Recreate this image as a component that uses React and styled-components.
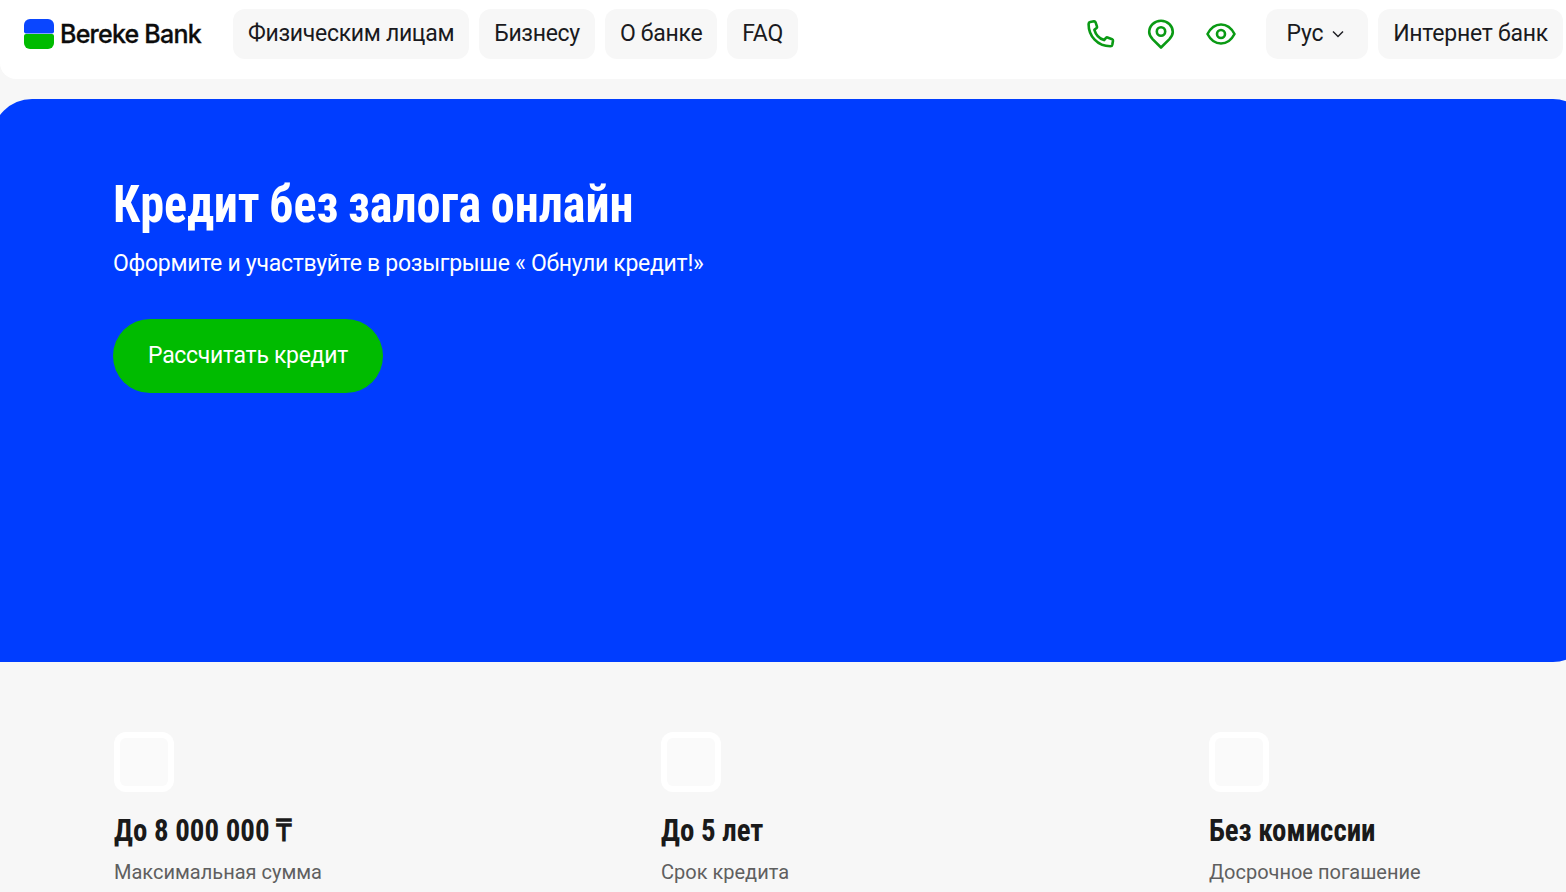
import React from "react";
import styled, { createGlobalStyle } from "styled-components";

const Global = createGlobalStyle`
  html, body { margin: 0; padding: 0; overflow: hidden; background: #f7f7f7; }
  body { font-family: Roboto, "Liberation Sans", sans-serif; color: #1a1a1a; }
`;
const Page = styled.div`width: 1566px; height: 892px; overflow: hidden;`;
const Header = styled.header`
  height: 79px; box-sizing: border-box; background: #fff;
  border-radius: 0 0 0 16px; display: flex; align-items: flex-start;
  padding: 9px 3px 0 24px;
`;
const Logo = styled.div`display: flex; align-items: center; gap: 6px; width: 209px; height: 50px;`;
const BrandName = styled.span`
  font-family: Inter, sans-serif; font-weight: 500; font-size: 25px; letter-spacing: -0.77px; color: #0c0c0c;
  -webkit-text-stroke: 0.3px #0c0c0c;
`;
const Nav = styled.nav`display: flex; gap: 10px;`;
const Pill = styled.a`
  height: 50px; box-sizing: border-box; padding: 0 15px; background: #f7f7f7; border-radius: 12px;
  display: flex; align-items: center; gap: 8px; font-size: 23px; letter-spacing: -0.3px; line-height: 50px; color: #1a1a20;
`;
const LangPill = styled(Pill)`padding: 0 23px 0 21px;`;
const BankPill = styled(Pill)`letter-spacing: -0.24px;`;
const Right = styled.div`margin-left: auto; display: flex; align-items: center; gap: 10px;`;
const Icons = styled.div`display: flex; align-items: center; gap: 30px; margin-right: 20px;`;
const Hero = styled.section`
  margin: 20px 0 0 -8px; width: 1601px; height: 563px; box-sizing: border-box;
  background: #003dff; border-radius: 40px 40px 40px 0; padding: 75px 0 0 121px;
`;
const Title = styled.h1`
  margin: 0; font-size: 51px; line-height: 62px; font-weight: 700; color: #fff; word-spacing: -1.5px;
  font-stretch: 75%; font-family: "Roboto Condensed", Roboto, sans-serif;
  transform: scaleX(0.944); transform-origin: left center; white-space: nowrap;
`;
const Sub = styled.p`margin: 12px 0 0; font-size: 23px; letter-spacing: -0.28px; line-height: 32px; color: #fff;`;
const Cta = styled.button`
  display: block; margin-top: 39px; width: 270px; height: 74px; border: 0; border-radius: 37px; background: #00bb00;
  color: #fff; font: 400 23px Roboto, sans-serif; letter-spacing: -0.3px; padding: 0 0 2px;
`;
const Features = styled.div`
  display: grid; grid-template-columns: 547px 548px 1fr; padding: 70px 0 0 114px;
`;
const Feature = styled.div`display: flex; flex-direction: column; align-items: flex-start;`;
const Tile = styled.div`
  width: 60px; height: 60px; border-radius: 12px; background: #fff; display: flex; align-items: center; justify-content: center;
`;
const TileInner = styled.div`width: 48px; height: 48px; background: #fafafa; border-radius: 6px;`;
const FTitle = styled.div`
  margin-top: 20px; font-size: 31px; line-height: 37px; font-weight: 700; color: #1a1a1a;
  font-stretch: 75%; font-family: "Roboto Condensed", Roboto, sans-serif;
  transform: scaleX(0.932); transform-origin: left center; white-space: nowrap;
`;
const FSub = styled.div`margin-top: 9px; font-size: 20px; line-height: 28px; color: #5f5f5f;`;

const G = "#0a9a14";
const Phone = () => (
  <svg width="30" height="30" viewBox="0 0 30 30" fill="none" stroke={G} strokeWidth="2.6" strokeLinejoin="round">
    <path d="M4.200 3 8 2.300c.8-.1 1.200.2 1.500.9l1.500 4.400c.2.600 0 1-.4 1.400L8.400 10.800c1.300 4.800 5 8.700 9.700 10.300l1.900-2.200c.4-.4.900-.6 1.500-.4l4.600 1.700c.7.300 1 .8.900 1.500l-.7 4c-.2 1-.9 1.500-1.900 1.500C11.500 27.200 2.500 17 2.600 4.900c0-1 .6-1.700 1.600-1.900Z" />
  </svg>
);
const Pin = () => (
  <svg width="30" height="30" viewBox="0 0 30 30" fill="none" stroke={G} strokeWidth="2.6">
    <path d="M15 28.500 6.800 20.300C4.600 18 3.200 15.600 3.200 13 3.200 6.600 8.600 1.800 15 1.800S26.800 6.600 26.800 13c0 2.600-1.400 5-3.600 7.300L15 28.500Z" strokeLinejoin="round" />
    <circle cx="15" cy="12.500" r="4.200" />
  </svg>
);
const Eye = () => (
  <svg width="30" height="30" viewBox="0 0 30 30" fill="none" stroke={G} strokeWidth="2.600">
    <path d="M1.500 15C4.500 9.200 9.500 5.500 15 5.500S25.500 9.200 28.500 15C25.500 20.800 20.500 24.500 15 24.500S4.500 20.800 1.500 15Z" strokeLinejoin="round" />
    <circle cx="15" cy="15" r="4" />
  </svg>
);
const Chevron = () => (
  <svg width="14" height="14" viewBox="0 0 14 14" fill="none" stroke="#1f1f24" strokeWidth="1.500">
    <path d="M2 4.500 7 9.500l5-5" />
  </svg>
);
const LogoMark = () => (
  <svg width="30" height="30" viewBox="0 0 30 30">
    <path d="M6 0h18a6 6 0 0 1 6 6v6.500a2 2 0 0 1-2 2H2a2 2 0 0 1-2-2V6a6 6 0 0 1 6-6Z" fill="#0a46ff" />
    <path d="M2 15h26a2 2 0 0 1 2 2v7a6 6 0 0 1-6 6H6a6 6 0 0 1-6-6v-7a2 2 0 0 1 2-2Z" fill="#00bb00" />
  </svg>
);

const features = [
  ["До 8 000 000 ₸", "Максимальная сумма"],
  ["До 5 лет", "Срок кредита"],
  ["Без комиссии", "Досрочное погашение"],
];

export default function App() {
  return (
    <Page>
      <Global />
      <Header>
        <Logo>
          <LogoMark />
          <BrandName>Bereke Bank</BrandName>
        </Logo>
        <Nav>
          <Pill>Физическим лицам</Pill>
          <Pill>Бизнесу</Pill>
          <Pill>О банке</Pill>
          <Pill>FAQ</Pill>
        </Nav>
        <Right>
          <Icons><Phone /><Pin /><Eye /></Icons>
          <LangPill>Рус <Chevron /></LangPill>
          <BankPill>Интернет банк</BankPill>
        </Right>
      </Header>
      <Hero>
        <Title>Кредит без залога онлайн</Title>
        <Sub>Оформите и участвуйте в розыгрыше « Обнули кредит!»</Sub>
        <Cta>Рассчитать кредит</Cta>
      </Hero>
      <Features>
        {features.map(([t, s]) => (
          <Feature key={t}>
            <Tile><TileInner /></Tile>
            <FTitle>{t}</FTitle>
            <FSub>{s}</FSub>
          </Feature>
        ))}
      </Features>
    </Page>
  );
}
